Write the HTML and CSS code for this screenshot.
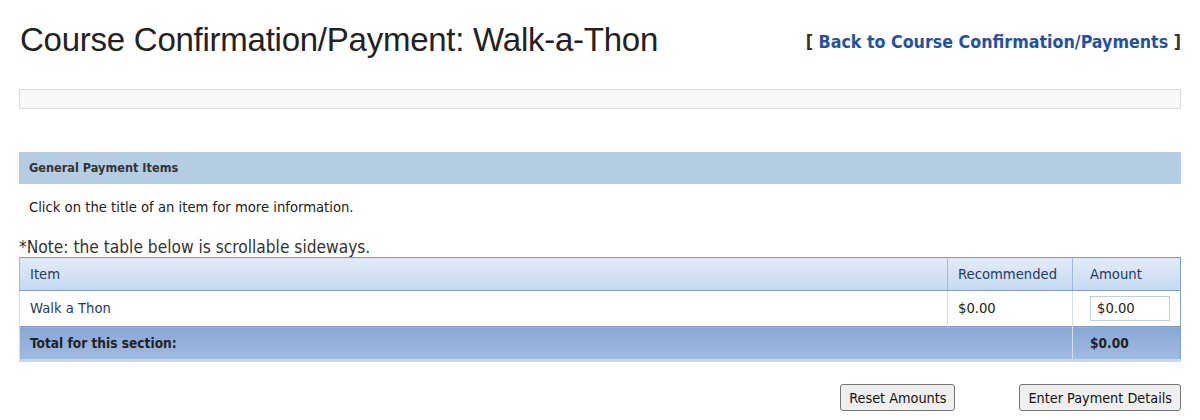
FILE: index.html
```html
<!DOCTYPE html>
<html lang="en">
<head>
  <meta charset="UTF-8" />
  <meta name="viewport" content="width=device-width, initial-scale=1.0" />
  <title>Course Confirmation/Payment: Walk-a-Thon</title>
  <link rel="stylesheet" href="styles.css">
</head>
<body>
  <div class="page">
    <div class="page-head">
      <h1>Course Confirmation/Payment: Walk-a-Thon</h1>
      <div class="back-link">[ <a href="#">Back to Course Confirmation/Payments</a> ]</div>
    </div>

    <div class="info-bar"></div>

    <div class="section-head">General Payment Items</div>
    <p class="hint">Click on the title of an item for more information.</p>

    <p class="note">*Note: the table below is scrollable sideways.</p>
    <table class="pay-table">
      <thead>
        <tr>
          <th class="col-item">Item</th>
          <th class="col-rec">Recommended</th>
          <th class="col-amt">Amount</th>
        </tr>
      </thead>
      <tbody>
        <tr>
          <td class="col-item"><a href="#">Walk a Thon</a></td>
          <td class="col-rec">$0.00</td>
          <td class="col-amt"><input type="text" value="$0.00" /></td>
        </tr>
      </tbody>
      <tfoot>
        <tr>
          <td colspan="2">Total for this section:</td>
          <td class="col-amt">$0.00</td>
        </tr>
      </tfoot>
    </table>

    <div class="actions">
      <button>Reset Amounts</button>
      <button>Enter Payment Details</button>
    </div>
  </div>
</body>
</html>
```

FILE: styles.css
```css
body {
  margin: 0;
  font-family: 'DejaVu Sans', sans-serif;
  color: #222;
  background: #ffffff;
}

.page {
  padding: 0 19px;
}

.page-head {
  display: flex;
  justify-content: space-between;
  align-items: flex-start;
  height: 89px;
}

h1 {
  margin: 21px 0 0 1px;
  font-family: 'Liberation Sans', Arial, sans-serif;
  font-weight: normal;
  font-size: 33px;
  color: #222;
  letter-spacing: -0.25px;
}

.back-link {
  margin-top: 32px;
  font-family: 'DejaVu Sans Condensed', 'DejaVu Sans', sans-serif;
  font-size: 17.7px;
  font-weight: bold;
  color: #333;
}

.back-link a {
  color: #2352a3;
  text-decoration: none;
}

.info-bar {
  height: 18px;
  background: #f8f8f8;
  border: 1px solid #dcdcdc;
}

.section-head {
  margin-top: 43px;
  height: 32px;
  line-height: 32px;
  padding-left: 10px;
  background: #b4cde3;
  font-family: 'DejaVu Sans Condensed', 'DejaVu Sans', sans-serif;
  font-size: 12.6px;
  font-weight: bold;
  color: #333;
}

.hint {
  margin: 0;
  padding: 16px 10px 0;
  font-size: 13.2px;
  color: #222;
}

.note {
  margin: 22px 0 0;
  font-family: 'DejaVu Sans Condensed', 'DejaVu Sans', sans-serif;
  font-size: 17.2px;
  color: #333;
  line-height: 20px;
}

.pay-table {
  width: 100%;
  border-collapse: collapse;
  border: 1px solid #7f9fc8;
  font-size: 13.2px;
}

.pay-table th {
  height: 32px;
  padding: 0 10px;
  text-align: left;
  font-weight: normal;
  color: #1e3a66;
  background: linear-gradient(#e2ecf8, #c5d9f0);
  border-left: 1px solid #9fb8d8;
  border-bottom: 1px solid #7f9fc8;
}

.pay-table td {
  height: 35px;
  padding: 0 10px;
  border-left: 1px solid #d3deec;
}

.pay-table a {
  color: #1e3a66;
  text-decoration: none;
}

.pay-table .col-rec {
  width: 104px;
}

.pay-table .col-amt {
  width: 80px;
  padding-left: 17px;
}

.pay-table input {
  width: 80px;
  height: 25px;
  box-sizing: border-box;
  padding: 0 6px;
  border: 1px solid #c3cfdc;
  font-family: inherit;
  font-size: 13.2px;
  color: #222;
}

.pay-table tfoot td {
  height: 32px;
  font-family: 'DejaVu Sans Condensed', 'DejaVu Sans', sans-serif;
  font-size: 13.6px;
  font-weight: bold;
  color: #222;
  background: linear-gradient(#87a7d3, #a1bbe0);
  border-top: 1px solid #7f9fc8;
  border-bottom: 3px solid #c9d7ea;
}

.actions {
  display: flex;
  justify-content: flex-end;
  gap: 64px;
  margin-top: 22px;
}

.actions button {
  height: 27px;
  padding: 0 8px;
  font-family: 'DejaVu Sans Condensed', 'DejaVu Sans', sans-serif;
  font-size: 14.3px;
  color: #111;
  background: #efefef;
  border: 1px solid #767676;
  border-radius: 3px;
}
```
